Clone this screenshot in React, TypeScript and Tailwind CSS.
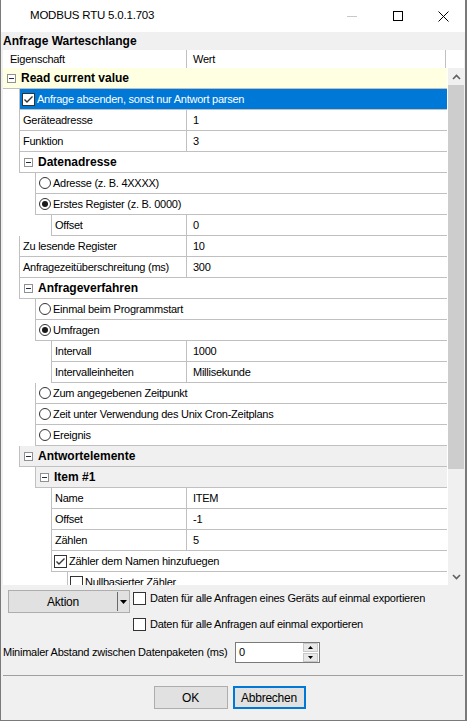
import React from "react";

type Row = {
  level: number;
  kind: "cat" | "prop" | "radio" | "check" | "selcheck";
  label: string;
  value?: string;
  checked?: boolean;
  bg?: string;
};

const rows: Row[] = [
  { level: 0, kind: "cat", label: "Read current value", bg: "yellow" },
  { level: 1, kind: "selcheck", label: "Anfrage absenden, sonst nur Antwort parsen", checked: true },
  { level: 1, kind: "prop", label: "Geräteadresse", value: "1" },
  { level: 1, kind: "prop", label: "Funktion", value: "3" },
  { level: 1, kind: "cat", label: "Datenadresse" },
  { level: 2, kind: "radio", label: "Adresse (z. B. 4XXXX)" },
  { level: 2, kind: "radio", label: "Erstes Register (z. B. 0000)", checked: true },
  { level: 3, kind: "prop", label: "Offset", value: "0" },
  { level: 1, kind: "prop", label: "Zu lesende Register", value: "10" },
  { level: 1, kind: "prop", label: "Anfragezeitüberschreitung (ms)", value: "300" },
  { level: 1, kind: "cat", label: "Anfrageverfahren" },
  { level: 2, kind: "radio", label: "Einmal beim Programmstart" },
  { level: 2, kind: "radio", label: "Umfragen", checked: true },
  { level: 3, kind: "prop", label: "Intervall", value: "1000" },
  { level: 3, kind: "prop", label: "Intervalleinheiten", value: "Millisekunde" },
  { level: 2, kind: "radio", label: "Zum angegebenen Zeitpunkt" },
  { level: 2, kind: "radio", label: "Zeit unter Verwendung des Unix Cron-Zeitplans" },
  { level: 2, kind: "radio", label: "Ereignis" },
  { level: 1, kind: "cat", label: "Antwortelemente", bg: "grey" },
  { level: 2, kind: "cat", label: "Item #1", bg: "grey" },
  { level: 3, kind: "prop", label: "Name", value: "ITEM" },
  { level: 3, kind: "prop", label: "Offset", value: "-1" },
  { level: 3, kind: "prop", label: "Zählen", value: "5" },
  { level: 3, kind: "check", label: "Zähler dem Namen hinzufuegen", checked: true },
  { level: 4, kind: "check", label: "Nullbasierter Zähler" },
];

const indent: Record<number, string> = {
  0: "w-0",
  1: "w-[16px]",
  2: "w-[32px]",
  3: "w-[48px]",
  4: "w-[64px]",
};

const font = { fontFamily: '"Liberation Sans", Arial, sans-serif' };

function Minus() {
  return (
    <div className="w-[9px] h-[9px] border border-[#919191] bg-white flex items-center justify-center shrink-0">
      <div className="w-[5px] h-[1px] bg-[#1e2a50]" />
    </div>
  );
}

function CheckBox({ checked }: { checked?: boolean }) {
  return (
    <div className="w-[13px] h-[13px] border border-[#333333] bg-white shrink-0 flex items-center justify-center">
      {checked && (
        <svg width="11" height="11" viewBox="0 0 11 11">
          <path d="M1.5 5.5 L4 8 L9.5 2.5" fill="none" stroke="#333333" strokeWidth="1.4" />
        </svg>
      )}
    </div>
  );
}

function Radio({ checked }: { checked?: boolean }) {
  return (
    <div className="w-[12px] h-[12px] rounded-full border border-[#333333] bg-white shrink-0 flex items-center justify-center">
      {checked && <div className="w-[6px] h-[6px] rounded-full bg-[#1a1a1a]" />}
    </div>
  );
}

function GridRow({ r }: { r: Row }) {
  const sp = <div className={`${indent[r.level]} shrink-0 bg-white`} />;
  if (r.kind === "prop") {
    return (
      <div className="flex h-[21px]">
        <div className="w-[183px] flex shrink-0">
          {sp}
          <div className="flex-1 border-l border-b border-[#c0c0c0] pl-[3px] flex items-center bg-white whitespace-nowrap overflow-hidden">
            {r.label}
          </div>
        </div>
        <div className="flex-1 border-l border-b border-[#c0c0c0] pl-[6px] flex items-center bg-white whitespace-nowrap">
          {r.value}
        </div>
      </div>
    );
  }
  if (r.kind === "cat") {
    const bg = r.bg === "yellow" ? "bg-[#ffffe1]" : r.bg === "grey" ? "bg-[#f0f0f0]" : "bg-white";
    const bl = r.level === 0 ? "" : "border-l";
    return (
      <div className="flex h-[21px]">
        {sp}
        <div className={`flex-1 ${bl} border-b border-[#c0c0c0] ${bg} flex items-center pl-[4px] whitespace-nowrap`}>
          <Minus />
          <span className="ml-[5px] font-bold text-[12px] tracking-normal">{r.label}</span>
        </div>
      </div>
    );
  }
  if (r.kind === "selcheck") {
    return (
      <div className="flex h-[21px]">
        {sp}
        <div className="flex-1 border-l border-b border-[#c0c0c0] bg-[#0078d7] text-white flex items-center pl-[2px] whitespace-nowrap">
          <CheckBox checked />
          <span className="ml-[2px]">{r.label}</span>
        </div>
      </div>
    );
  }
  if (r.kind === "radio") {
    return (
      <div className="flex h-[21px]">
        {sp}
        <div className="flex-1 border-l border-b border-[#c0c0c0] bg-white flex items-center pl-[3px] whitespace-nowrap">
          <Radio checked={r.checked} />
          <span className="ml-[2px]">{r.label}</span>
        </div>
      </div>
    );
  }
  return (
    <div className="flex h-[21px]">
      {sp}
      <div className="flex-1 border-l border-b border-[#c0c0c0] bg-white flex items-center pl-[2px] whitespace-nowrap">
        <CheckBox checked={r.checked} />
        <span className="ml-[2px]">{r.label}</span>
      </div>
    </div>
  );
}

export default function App() {
  return (
    <div
      className="w-[467px] h-[721px] bg-[#f0f0f0] border-l border-r-[2px] border-b border-[#7a7a7a] flex flex-col text-[11px] tracking-[-0.25px] text-black overflow-hidden"
      style={font}
    >
      {/* Title bar */}
      <div className="h-[32px] bg-white flex items-center shrink-0 relative">
        <span className="ml-[29px] text-[11.5px] tracking-[-0.2px] text-black">MODBUS RTU 5.0.1.703</span>
        <div className="flex-1" />
        <div className="w-[46px] flex justify-center">
          <div className="w-[10px] h-[1px] bg-[#c8c8c8]" />
        </div>
        <div className="w-[46px] flex justify-center">
          <div className="w-[10px] h-[10px] border border-black" />
        </div>
        <div className="w-[44px] flex justify-center">
          <svg width="11" height="11" viewBox="0 0 11 11">
            <path d="M0.5 0.5 L10.5 10.5 M10.5 0.5 L0.5 10.5" stroke="#000" strokeWidth="1" />
          </svg>
        </div>
      </div>

      {/* Group label */}
      <div className="h-[18px] pl-[2px] flex items-center shrink-0">
        <span className="font-bold text-[12px] tracking-normal">Anfrage Warteschlange</span>
      </div>

      {/* Header */}
      <div className="ml-[2px] mr-[1px] h-[18px] flex shrink-0 bg-white">
        <div className="w-[184px] border-r border-[#c0c0c0] pl-[7px] flex items-center">Eigenschaft</div>
        <div className="w-[259px] border-r border-[#c0c0c0] pl-[6px] flex items-center">Wert</div>
        <div className="flex-1" />
      </div>

      {/* Grid */}
      <div className="ml-[2px] mr-[1px] h-[517px] flex shrink-0 overflow-hidden">
        <div className="w-[444px] overflow-hidden bg-white">
          {rows.map((r, i) => (
            <GridRow key={i} r={r} />
          ))}
        </div>
        <div className="w-[1px] bg-white" />
        <div className="flex-1 bg-[#f0f0f0] flex flex-col">
          <div className="h-[17px] flex items-center justify-center">
            <svg width="9" height="6" viewBox="0 0 9 6">
              <path d="M1 5 L4.5 1.5 L8 5" fill="none" stroke="#606060" strokeWidth="1.6" />
            </svg>
          </div>
          <div className="h-[384px] bg-[#cdcdcd]" />
          <div className="flex-1" />
          <div className="h-[17px] flex items-center justify-center">
            <svg width="9" height="6" viewBox="0 0 9 6">
              <path d="M1 1 L4.5 4.5 L8 1" fill="none" stroke="#606060" strokeWidth="1.6" />
            </svg>
          </div>
        </div>
      </div>

      {/* Bottom controls */}
      <div className="flex mt-[5px] shrink-0">
        <div className="ml-[7px] w-[122px] h-[23px] border border-[#adadad] bg-[#e1e1e1] flex items-center">
          <div className="flex-1 text-center text-[12px]">Aktion</div>
          <div className="w-[1px] h-[19px] bg-[#6a6a6a]" />
          <div className="w-[11px] flex justify-center">
            <svg width="7" height="4" viewBox="0 0 7 4">
              <path d="M0 0 L7 0 L3.5 4 Z" fill="#000" />
            </svg>
          </div>
        </div>
        <div className="ml-[3px] flex flex-col">
          <div className="h-[16px] flex items-center">
            <CheckBox />
            <span className="ml-[4px]">Daten für alle Anfragen eines Geräts auf einmal exportieren</span>
          </div>
          <div className="h-[16px] mt-[10px] flex items-center">
            <CheckBox />
            <span className="ml-[4px]">Daten für alle Anfragen auf einmal exportieren</span>
          </div>
        </div>
      </div>

      <div className="flex items-center mt-[10px] shrink-0">
        <span className="ml-[2px] w-[230px] whitespace-nowrap">Minimaler Abstand zwischen Datenpaketen (ms)</span>
        <div className="ml-[2px] w-[85px] h-[21px] border border-[#7a7a7a] bg-white flex items-center">
          <span className="ml-[3px] flex-1">0</span>
          <div className="w-[15px] h-[19px] flex flex-col gap-[1px] mr-[1px]">
            <div className="flex-1 bg-[#e8e8e8] border border-[#c8c8c8] flex items-center justify-center">
              <svg width="5" height="3" viewBox="0 0 5 3">
                <path d="M0 3 L5 3 L2.5 0 Z" fill="#000" />
              </svg>
            </div>
            <div className="flex-1 bg-[#e8e8e8] border border-[#c8c8c8] flex items-center justify-center">
              <svg width="5" height="3" viewBox="0 0 5 3">
                <path d="M0 0 L5 0 L2.5 3 Z" fill="#000" />
              </svg>
            </div>
          </div>
        </div>
      </div>

      <div className="mx-[2px] mt-[12px] h-[1px] bg-[#a0a0a0] shrink-0" />

      <div className="flex justify-center mt-[10px] gap-[5px] shrink-0 pr-[7px]">
        <div className="w-[74px] h-[23px] border border-[#adadad] bg-[#e1e1e1] flex items-center justify-center text-[12px]">
          OK
        </div>
        <div className="w-[73px] h-[23px] border-2 border-[#0078d7] bg-[#e1e1e1] flex items-center justify-center text-[12px]">
          Abbrechen
        </div>
      </div>
    </div>
  );
}
